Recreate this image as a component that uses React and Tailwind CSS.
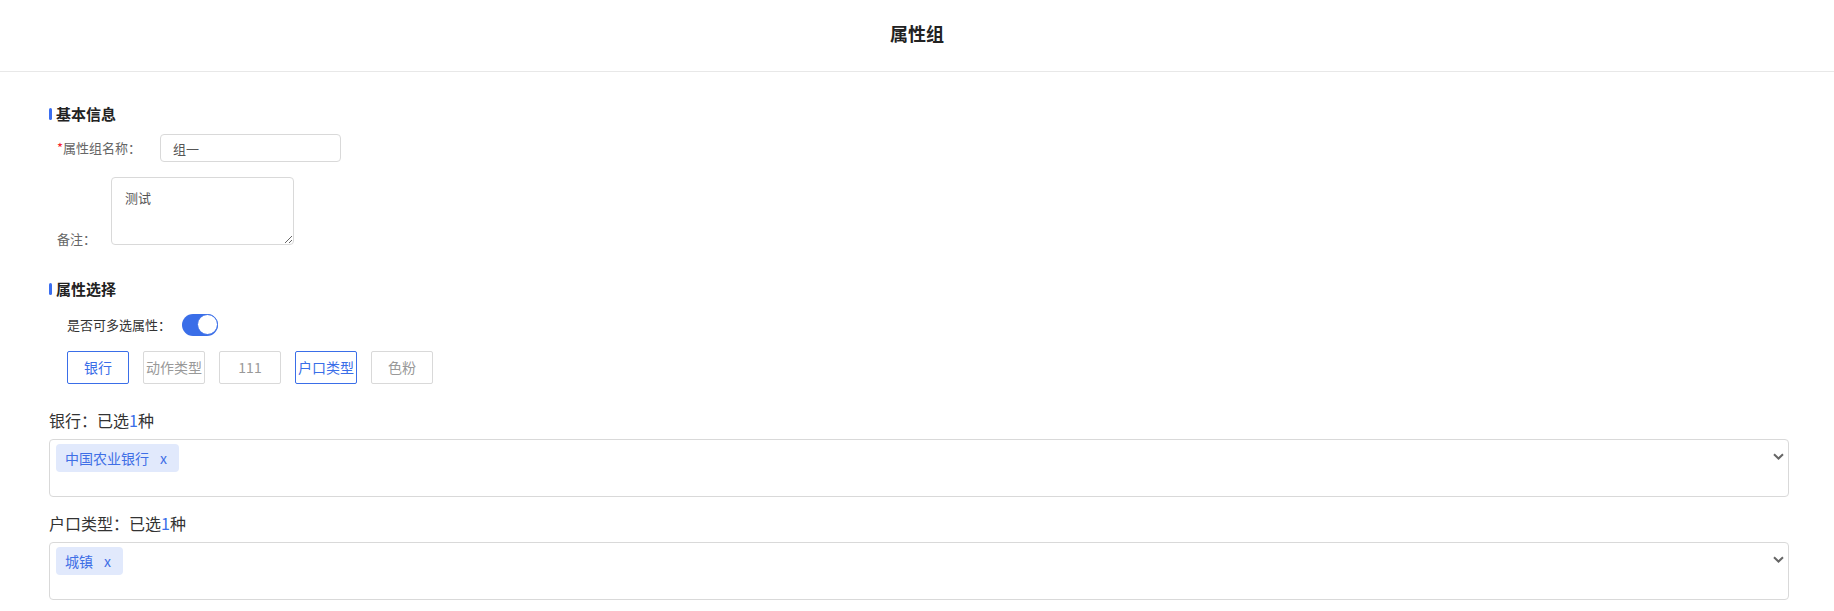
import { useState } from "react";

const attrs = [
  { id: 1, name: "银行", active: true },
  { id: 2, name: "动作类型", active: false },
  { id: 3, name: "111", active: false },
  { id: 4, name: "户口类型", active: true },
  { id: 5, name: "色粉", active: false },
];

const picked = [
  { id: 1, label: "银行", tags: ["中国农业银行"] },
  { id: 4, label: "户口类型", tags: ["城镇"] },
];

const SectionTitle = ({ children, className = "" }) => (
  <div className={`flex items-center h-[20px] ${className}`}>
    <span className="w-[3px] h-[12px] rounded-full bg-[#3b6ef0] mr-[4px]" />
    <span className="text-[15px] font-bold text-[#222]">{children}</span>
  </div>
);

const Chevron = () => (
  <svg width="11" height="7" viewBox="0 0 11 7" className="mt-[9px] mr-[4px] shrink-0">
    <path d="M1 1.2l4.5 4.3 4.5-4.3" fill="none" stroke="#666" strokeWidth="2" />
  </svg>
);

export default function App() {
  const [multi, setMulti] = useState(true);

  return (
    <div
      className="min-h-screen bg-white text-[#333]"
      style={{ fontFamily: '"Noto Sans CJK SC", "Noto Sans", sans-serif' }}
    >
      {/* Header */}
      <div className="h-[72px] border-b border-[#e8e8e8] flex justify-center pt-[22px]">
        <h1 className="text-[18px] leading-[22px] font-bold text-[#222]">属性组</h1>
      </div>

      <div className="pl-[49px] pr-[45px] pt-[32px]">
        {/* 基本信息 */}
        <SectionTitle>基本信息</SectionTitle>

        <div className="flex items-center mt-[10px] pl-[8px]">
          <label className="text-[13px] text-[#666] w-[103px]">
            <span className="text-[#f5222d]">*</span>属性组名称：
          </label>
          <input
            defaultValue="组一"
            className="w-[181px] h-[28px] border border-[#d9d9d9] rounded-[4px] px-[12px] text-[13px] text-[#555] outline-none"
          />
        </div>

        <div className="flex items-end mt-[15px] pl-[8px]">
          <label className="text-[13px] leading-[14px] text-[#666] w-[54px] mb-[-1px]">备注：</label>
          <textarea
            defaultValue="测试"
            className="w-[183px] h-[68px] border border-[#d9d9d9] rounded-[4px] px-[13px] pt-[10px] text-[13px] leading-[20px] text-[#555] outline-none resize"
          />
        </div>

        {/* 属性选择 */}
        <SectionTitle className="mt-[34px]">属性选择</SectionTitle>

        <div className="flex items-center mt-[14px] pl-[18px] h-[23px]">
          <span className="text-[13px] text-[#333]">是否可多选属性：</span>
          <button
            onClick={() => setMulti(!multi)}
            className={`ml-[11px] w-[36px] h-[22px] rounded-full flex items-center ${
              multi ? "bg-[#3a6ee8] justify-end" : "bg-[#ccc] justify-start"
            }`}
          >
            <span className="w-[21px] h-[21px] rounded-full bg-white border border-[#3a6ee8]" />
          </button>
        </div>

        <div className="flex gap-[14px] mt-[15px] pl-[18px]">
          {attrs.map((a) => (
            <button
              key={a.id}
              className={`w-[62px] h-[33px] border rounded-[2px] text-[14px] flex items-center justify-center ${
                a.active
                  ? "border-[#3a6ee8] text-[#3a6ee8]"
                  : "border-[#d9d9d9] text-[#999]"
              }`}
            >
              {a.name}
            </button>
          ))}
        </div>

        {/* 已选 */}
        {picked.map((p, i) => (
          <div key={p.id} className={i === 0 ? "mt-[24px]" : "mt-[14px]"}>
            <div className="text-[16px] leading-[24px] text-[#333]">
              {p.label}：已选<span className="text-[#3a6ee8]">1</span>种
            </div>
            <div className="mt-[7px] h-[58px] border border-[#d9d9d9] rounded-[4px] flex justify-between items-start pl-[6px] pt-[4px]">
              <div className="flex gap-[6px]">
                {p.tags.map((t) => (
                  <span
                    key={t}
                    className="h-[28px] pl-[9px] pr-[12px] rounded-[4px] bg-[#e1e9fc] text-[#3f6fe6] text-[14px] flex items-center gap-[11px]"
                  >
                    {t}
                    <span className="text-[14px]">x</span>
                  </span>
                ))}
              </div>
              <Chevron />
            </div>
          </div>
        ))}
      </div>
    </div>
  );
}
